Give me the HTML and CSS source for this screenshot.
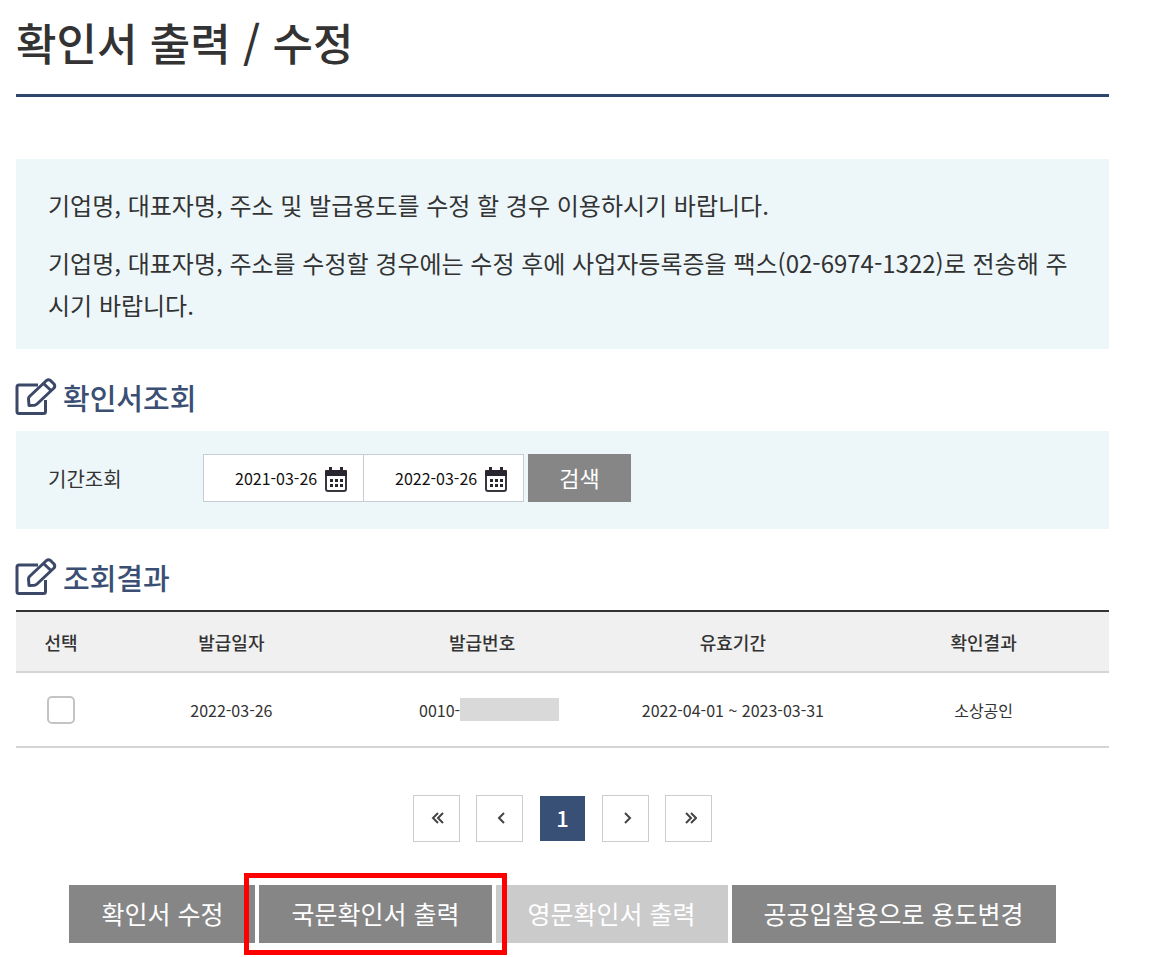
FILE: index.html
```html
<!DOCTYPE html>
<html lang="ko">
<head>
  <meta charset="UTF-8" />
  <title>확인서 출력 / 수정</title>
  <link rel="stylesheet" href="styles.css">
</head>
<body>
  <svg class="sprite" aria-hidden="true">
    <symbol id="icon-edit" viewBox="0 0 42 38">
      <path d="M23 7H4Q2 7 2 9V33.500Q2 35.500 4 35.500H28.500Q30.500 35.500 30.500 33.500V22" />
      <path d="M14 27.500L13.500 21Q13.500 19.500 14.500 18.500L31.500 2.500Q33.500 1 35.500 2.500L39 6Q40.500 8 39 10L22 26Q21 27 19.500 27.200Z" />
      <path d="M28.500 5.500L36 12.500" />
    </symbol>
    <symbol id="icon-calendar" viewBox="0 0 24 26">
      <rect x="2" y="4" width="20" height="20" rx="2" fill="none" stroke="#3a3340" stroke-width="2" />
      <path fill="#2b2530" d="M1 4q0-1 1-1h20q1 0 1 1v5H1zM5 0h3v5H5zM16 0h3v5h-3z" />
      <path fill="#2b2530" d="M6 12h3v3H6zM11 12h3v3h-3zM16 12h3v3h-3zM6 17h3v3H6zM11 17h3v3h-3zM16 17h3v3h-3z" />
    </symbol>
  </svg>

  <div class="container">
    <h1>확인서 출력 / 수정</h1>

    <div class="notice">
      <p>기업명, 대표자명, 주소 및 발급용도를 수정 할 경우 이용하시기 바랍니다.</p>
      <p>기업명, 대표자명, 주소를 수정할 경우에는 수정 후에 사업자등록증을 팩스(02-6974-1322)로 전송해 주시기 바랍니다.</p>
    </div>

    <h2><svg class="icon-edit"><use href="#icon-edit" /></svg>확인서조회</h2>
    <form class="search" onsubmit="return false">
      <label for="startDate">기간조회</label>
      <div class="dates">
        <div class="date-box">
          <input type="text" id="startDate" value="2021-03-26" />
          <button type="button" class="btn-cal" aria-label="시작일 선택"><svg><use href="#icon-calendar" /></svg></button>
        </div>
        <div class="date-box">
          <input type="text" id="endDate" value="2022-03-26" aria-label="종료일" />
          <button type="button" class="btn-cal" aria-label="종료일 선택"><svg><use href="#icon-calendar" /></svg></button>
        </div>
      </div>
      <button type="submit" class="btn-search">검색</button>
    </form>

    <h2><svg class="icon-edit"><use href="#icon-edit" /></svg>조회결과</h2>
    <table class="result">
      <thead>
        <tr>
          <th class="col-check">선택</th>
          <th>발급일자</th>
          <th>발급번호</th>
          <th>유효기간</th>
          <th>확인결과</th>
        </tr>
      </thead>
      <tbody>
        <tr>
          <td><input type="checkbox" class="check" aria-label="선택" /></td>
          <td>2022-03-26</td>
          <td><div class="number">0010-<span class="mask"></span></div></td>
          <td>2022-04-01 ~ 2023-03-31</td>
          <td>소상공인</td>
        </tr>
      </tbody>
    </table>

    <nav class="paging">
      <a href="#" aria-label="처음"><svg viewBox="0 0 14 14"><path d="M7 2L2 7l5 5M12 2L7 7l5 5" /></svg></a>
      <a href="#" aria-label="이전"><svg viewBox="0 0 14 14"><path d="M10 2L5 7l5 5" /></svg></a>
      <a href="#" class="on">1</a>
      <a href="#" aria-label="다음"><svg viewBox="0 0 14 14"><path d="M5 2l5 5-5 5" /></svg></a>
      <a href="#" aria-label="마지막"><svg viewBox="0 0 14 14"><path d="M3 2l5 5-5 5M8 2l5 5-5 5" /></svg></a>
    </nav>

    <div class="buttons">
      <button type="button">확인서 수정</button>
      <button type="button" class="marked">국문확인서 출력</button>
      <button type="button" disabled>영문확인서 출력</button>
      <button type="button">공공입찰용으로 용도변경</button>
    </div>
  </div>
</body>
</html>
```
FILE: styles.css
```css
:root {
  --navy: #2f466f;
  --text-color: #333;
  --panel-bg: #edf7fa;
  --btn-gray: #868686;
  --border-color: #d5d5d5;
}

* {
  box-sizing: border-box;
  margin: 0;
  padding: 0;
}

body {
  font-family: "Noto Sans CJK KR", "Noto Sans", sans-serif;
  color: var(--text-color);
  background: #fff;
}

input, button {
  font-family: inherit;
}

button {
  border: none;
  cursor: pointer;
}

.sprite {
  position: absolute;
  width: 0;
  height: 0;
}

.container {
  padding: 10px 47px 14px 16px;
}

h1 {
  font-size: 44px;
  font-weight: 500;
  line-height: 64px;
  padding-bottom: 20px;
  border-bottom: 3px solid var(--navy);
}

.notice {
  margin-top: 62px;
  padding: 25px 40px 23px 32px;
  background: var(--panel-bg);
  font-size: 24px;
  line-height: 42px;
}

.notice p + p {
  margin-top: 16px;
}

h2 {
  display: flex;
  align-items: center;
  gap: 6px;
  margin-top: 28px;
  height: 40px;
  color: #3b4f75;
  font-size: 29px;
  font-weight: 500;
}

.icon-edit {
  width: 42px;
  height: 38px;
  margin-left: -1px;
  fill: none;
  stroke: #3b4868;
  stroke-width: 3;
  stroke-linejoin: round;
}

/* 조회 조건 */
.search {
  display: flex;
  align-items: center;
  margin-top: 14px;
  padding: 23px 32px 27px;
  background: var(--panel-bg);
}

.search label {
  width: 155px;
  font-size: 20px;
}

.dates {
  display: flex;
}

.date-box {
  display: flex;
  align-items: center;
  height: 48px;
  width: 161px;
  padding-left: 31px;
  background: #fff;
  border: 1px solid #c5ced4;
}

.date-box + .date-box {
  margin-left: -1px;
}

.date-box input {
  width: 84px;
  border: none;
  outline: none;
  background: none;
  color: #111;
  font-size: 16px;
}

.btn-cal {
  margin: 4px 0 0 5px;
  width: 24px;
  height: 26px;
  background: none;
}

.btn-cal svg {
  display: block;
  width: 24px;
  height: 26px;
}

.btn-search {
  margin-left: 4px;
  width: 103px;
  height: 48px;
  padding-bottom: 2px;
  background: var(--btn-gray);
  color: #fff;
  font-size: 22px;
}

/* 조회 결과 */
.result {
  width: 100%;
  margin-top: 13px;
  table-layout: fixed;
  border-collapse: collapse;
  border-top: 2px solid #333;
  text-align: center;
}

.col-check {
  width: 90px;
}

.result th {
  height: 61px;
  background: #f0f0f0;
  border-bottom: 2px solid var(--border-color);
  font-size: 18px;
  font-weight: 500;
}

.result td {
  height: 75px;
  border-bottom: 2px solid var(--border-color);
  font-size: 16px;
}

.check {
  appearance: none;
  display: block;
  width: 28px;
  height: 28px;
  margin: 0 auto;
  background: #fff;
  border: 2px solid #c4c4c4;
  border-radius: 5px;
}

.check:checked {
  background: var(--navy);
}

.number {
  display: flex;
  align-items: center;
  justify-content: center;
  padding-left: 14px;
}

.mask {
  width: 99px;
  height: 23px;
  background: #d9d9d9;
}

.paging {
  display: flex;
  justify-content: center;
  gap: 16px;
  margin-top: 47px;
}

.paging a {
  display: flex;
  align-items: center;
  justify-content: center;
  width: 47px;
  height: 47px;
  padding: 0 0 2px 3px;
  border: 1px solid #ccc;
  color: var(--text-color);
  font-size: 22px;
  font-weight: 500;
  text-decoration: none;
}

.paging a.on {
  padding: 0 0 4px;
  background: #385075;
  border-color: #fff;
  background-clip: padding-box;
  color: #fff;
}

.paging svg {
  width: 14px;
  height: 14px;
  fill: none;
  stroke: #444;
  stroke-width: 2;
}

.buttons {
  display: flex;
  justify-content: center;
  gap: 4px;
  margin-top: 43px;
}

.buttons button {
  height: 58px;
  padding: 0 32px 2px;
  background: var(--btn-gray);
  color: #fff;
  font-size: 25px;
}

.buttons button:disabled {
  background: #cbcbcb;
}

/* 강조 표시 */
.buttons .marked {
  position: relative;
}

.marked::after {
  content: "";
  position: absolute;
  z-index: 1;
  inset: -12px -15px;
  border: 5px solid #f00;
}
```
